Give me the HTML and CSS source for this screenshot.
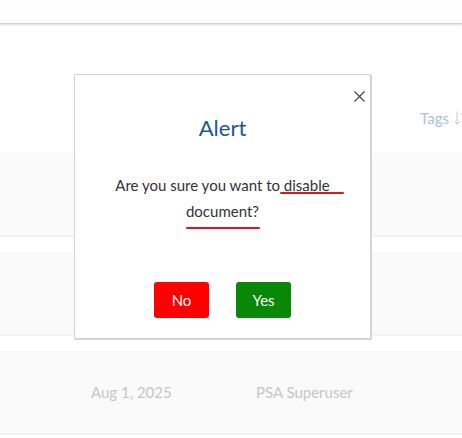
FILE: index.html
```html
<!DOCTYPE html>
<html>
<head>
  <link rel="stylesheet" href="styles.css">
</head>
<body>
  <div class="topbar"></div>

  <div class="list">
    <div class="list-head">
      <span class="col-tags">Tags</span>
      <svg class="sort-icon" viewBox="0 0 12 14" fill="none" stroke="currentColor">
        <path d="M3 1V13M0.5 10.5L3 13L5.5 10.5" stroke-linecap="round"/>
        <path d="M9 13V1M6.5 3.5L9 1L11.5 3.5" stroke-linecap="round"/>
      </svg>
    </div>

    <div class="row"></div>
    <div class="row"></div>
    <div class="row">
      <span class="cell-date">Aug 1, 2025</span>
      <span class="cell-user">PSA Superuser</span>
    </div>
  </div>

  <div class="modal">
    <button class="close" aria-label="Close">
      <svg viewBox="0 0 11 11" fill="none" stroke="currentColor">
        <path d="M0.5 0.5L10.5 10.5M10.5 0.5L0.5 10.5"/>
      </svg>
    </button>
    <div class="modal-title">Alert</div>
    <div class="modal-text">
      Are you sure you want to <span class="mark mark-first">disable</span><br>
      <span class="mark mark-second">document?</span>
    </div>
    <div class="modal-actions">
      <button class="btn btn-no">No</button>
      <button class="btn btn-yes">Yes</button>
    </div>
  </div>
</body>
</html>
```

FILE: styles.css
```css
* {
  margin: 0;
  padding: 0;
  box-sizing: border-box;
}

body {
  width: 462px;
  height: 438px;
  overflow: hidden;
  position: relative;
  background: #fff;
  font-family: Lato, "Open Sans", sans-serif;
  color: #333;
}

.topbar {
  height: 24px;
  background: #fefefe;
  border-bottom: 1px solid #cfcfcf;
  box-shadow: 0 1px 2px rgba(0, 0, 0, 0.15);
}

/* list behind the dialog */
.list-head {
  height: 129px;
  display: flex;
  align-items: center;
  justify-content: flex-end;
  gap: 5px;
  padding-top: 58px;
  margin-right: -4px;
}

.col-tags {
  font-size: 15px;
  color: #a9c3de;
}

.sort-icon {
  width: 12px;
  height: 14px;
  color: #c8c8c8;
  stroke-width: 1;
}

.row {
  height: 84px;
  margin-bottom: 15px;
  background: #fafafa;
  border-bottom: 2px solid #f2f2f2;
  display: flex;
  align-items: center;
  font-size: 15px;
  color: #c6c6c6;
}

.cell-date {
  margin-left: 91px;
  width: 165px;
}

/* dialog */
.modal {
  position: absolute;
  left: 74px;
  top: 74px;
  width: 297px;
  height: 265px;
  background: #fff;
  border: 1px solid #d4d4d4;
  box-shadow: 1px 1px 0 #d4d4d4;
  display: flex;
  flex-direction: column;
  align-items: center;
  padding-top: 40px;
}

.close {
  position: absolute;
  top: 16px;
  right: 5px;
  width: 11px;
  height: 11px;
  border: none;
  background: none;
  color: #444;
  cursor: pointer;
}

.close svg {
  display: block;
  width: 11px;
  height: 11px;
  stroke-width: 1.2;
}

.modal-title {
  font-size: 22px;
  line-height: 26px;
  color: #1a5891;
}

.modal-text {
  margin-top: 31px;
  font-size: 15px;
  line-height: 26px;
  text-align: center;
  color: #333;
}

.mark {
  position: relative;
}

.mark::after {
  content: '';
  position: absolute;
  height: 2px;
  background: #e0161e;
  border-radius: 1px;
}

.mark-first::after {
  left: -4px;
  right: -14px;
  bottom: 0;
}

.mark-second::after {
  left: 0;
  right: -1px;
  bottom: -9px;
}

.modal-actions {
  margin-top: 58px;
  display: flex;
  gap: 27px;
}

.btn {
  width: 55px;
  height: 36px;
  border: none;
  border-radius: 3px;
  font-family: inherit;
  font-size: 15px;
  color: #fff;
  cursor: pointer;
}

.btn-no {
  background: #ff0000;
}

.btn-yes {
  background: #088708;
}
```
